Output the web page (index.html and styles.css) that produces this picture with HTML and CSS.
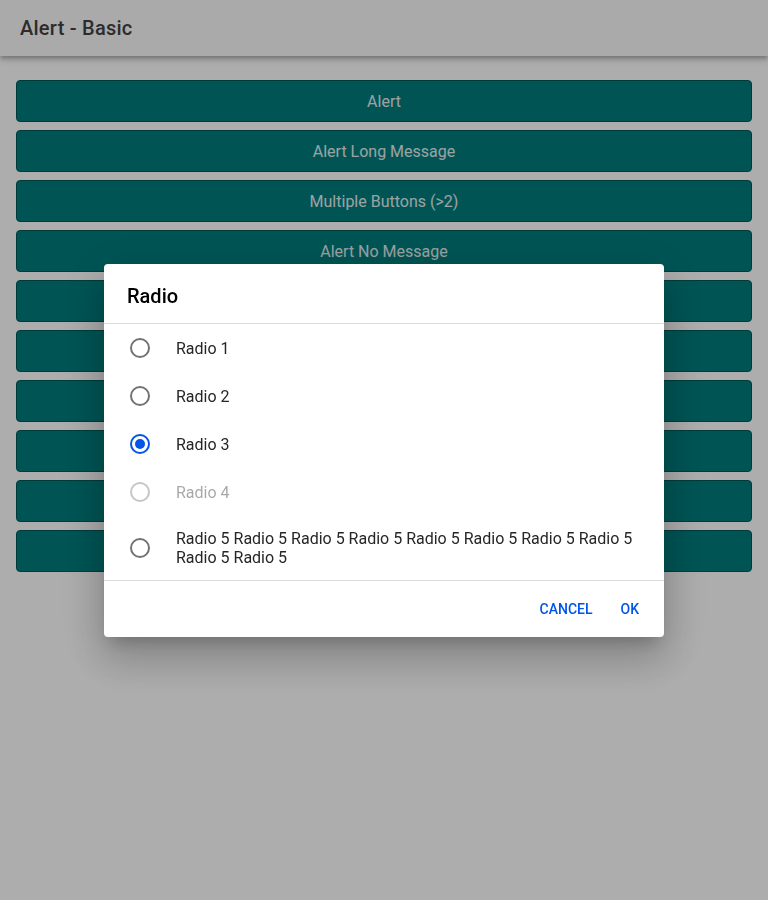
FILE: index.html
```html
<!DOCTYPE html>
<html lang="en">
<head>
<meta charset="utf-8">
<title>Alert - Basic</title>
<link rel="stylesheet" href="styles.css">
</head>
<body>
<header class="toolbar">
  <h1 class="toolbar-title">Alert - Basic</h1>
</header>
<main class="content">
  <button class="btn">Alert</button>
  <button class="btn">Alert Long Message</button>
  <button class="btn">Multiple Buttons (&gt;2)</button>
  <button class="btn">Alert No Message</button>
  <button class="btn" aria-label="Confirm"></button>
  <button class="btn" aria-label="Prompt"></button>
  <button class="btn" aria-label="Radio"></button>
  <button class="btn" aria-label="Checkbox"></button>
  <button class="btn" aria-label="Alert Translucent"></button>
  <button class="btn" aria-label="Custom Class"></button>
</main>

<div class="backdrop"></div>
<div class="alert-wrapper">
  <div class="alert" role="dialog">
    <div class="alert-head">
      <h2 class="alert-title">Radio</h2>
    </div>
    <div class="alert-radio-group">
      <div class="radio-item">
        <span class="radio-icon"></span>
        <span class="radio-label">Radio 1</span>
      </div>
      <div class="radio-item">
        <span class="radio-icon"></span>
        <span class="radio-label">Radio 2</span>
      </div>
      <div class="radio-item checked">
        <span class="radio-icon"><span class="radio-inner"></span></span>
        <span class="radio-label">Radio 3</span>
      </div>
      <div class="radio-item disabled">
        <span class="radio-icon"></span>
        <span class="radio-label">Radio 4</span>
      </div>
      <div class="radio-item">
        <span class="radio-icon"></span>
        <span class="radio-label">Radio 5 Radio 5 Radio 5 Radio 5 Radio 5 Radio 5 Radio 5 Radio 5 Radio 5 Radio 5</span>
      </div>
    </div>
    <div class="alert-buttons">
      <button class="alert-button">Cancel</button>
      <button class="alert-button">Ok</button>
    </div>
  </div>
</div>
</body>
</html>
```
FILE: styles.css
```css
* { box-sizing: border-box; }
html, body { margin: 0; padding: 0; }
body {
  width: 768px;
  height: 900px;
  background: #ffffff;
  font-family: Roboto, "Liberation Sans", sans-serif;
  overflow: hidden;
}
.toolbar {
  height: 56px;
  background: #fbfbfb;
  display: flex;
  align-items: center;
  padding: 0 20px;
  box-shadow: 0 2px 4px -1px rgba(0,0,0,0.2), 0 4px 5px 0 rgba(0,0,0,0.14), 0 1px 10px 0 rgba(0,0,0,0.12);
  position: relative;
  z-index: 1;
}
.toolbar-title {
  margin: 0;
  font-size: 20px;
  font-weight: 500;
  color: #424242;
  letter-spacing: 0.0125em;
}
.content {
  padding: 24px 16px;
  display: flex;
  flex-direction: column;
  gap: 8px;
}
.btn {
  height: 42px;
  width: 100%;
  border: 1px solid #005858;
  border-radius: 4px;
  background: #007d7d;
  color: #e4f0f0;
  font-family: Roboto, "Liberation Sans", sans-serif;
  font-size: 16px;
  padding: 0;
}
.backdrop {
  position: fixed;
  inset: 0;
  background: rgba(0,0,0,0.32);
  z-index: 2;
}
.alert-wrapper {
  position: fixed;
  inset: 0;
  z-index: 3;
  display: flex;
  align-items: center;
  justify-content: center;
  padding-top: 1px;
}
.alert {
  width: 560px;
  background: #fff;
  border-radius: 4px;
  box-shadow: 0 11px 15px -7px rgba(0,0,0,0.2), 0 24px 38px 3px rgba(0,0,0,0.14), 0 9px 46px 8px rgba(0,0,0,0.12);
  display: flex;
  flex-direction: column;
}
.alert-head {
  padding: 20px 23px 15px;
}
.alert-title {
  margin: 0;
  font-size: 20px;
  line-height: 24px;
  font-weight: 500;
  color: #000;
}
.alert-radio-group {
  border-top: 1px solid #dcdcdc;
  border-bottom: 1px solid #dcdcdc;
}
.radio-item {
  min-height: 48px;
  display: flex;
  align-items: center;
  padding: 13px 26px 13px 26px;
}
.radio-icon {
  flex: none;
  width: 20px;
  height: 20px;
  border: 2px solid #737373;
  border-radius: 50%;
  display: flex;
  align-items: center;
  justify-content: center;
}
.radio-label {
  margin-left: 26px;
  font-size: 16px;
  line-height: 19px;
  color: #262626;
}
.radio-item.checked .radio-icon { border-color: #0054e9; }
.radio-inner {
  width: 10px;
  height: 10px;
  border-radius: 50%;
  background: #0054e9;
}
.radio-item.disabled { opacity: 0.4; }
.alert-buttons {
  display: flex;
  justify-content: flex-end;
  padding: 8px 15px 8px 8px;
  height: 56px;
  align-items: center;
}
.alert-button {
  background: none;
  border: 0;
  padding: 10px;
  margin-right: 8px;
  color: #0054e9;
  font-family: Roboto, "Liberation Sans", sans-serif;
  font-size: 14px;
  font-weight: 500;
  text-transform: uppercase;
  letter-spacing: 0;
}
.alert-button:last-child { margin-right: 0; }
```
